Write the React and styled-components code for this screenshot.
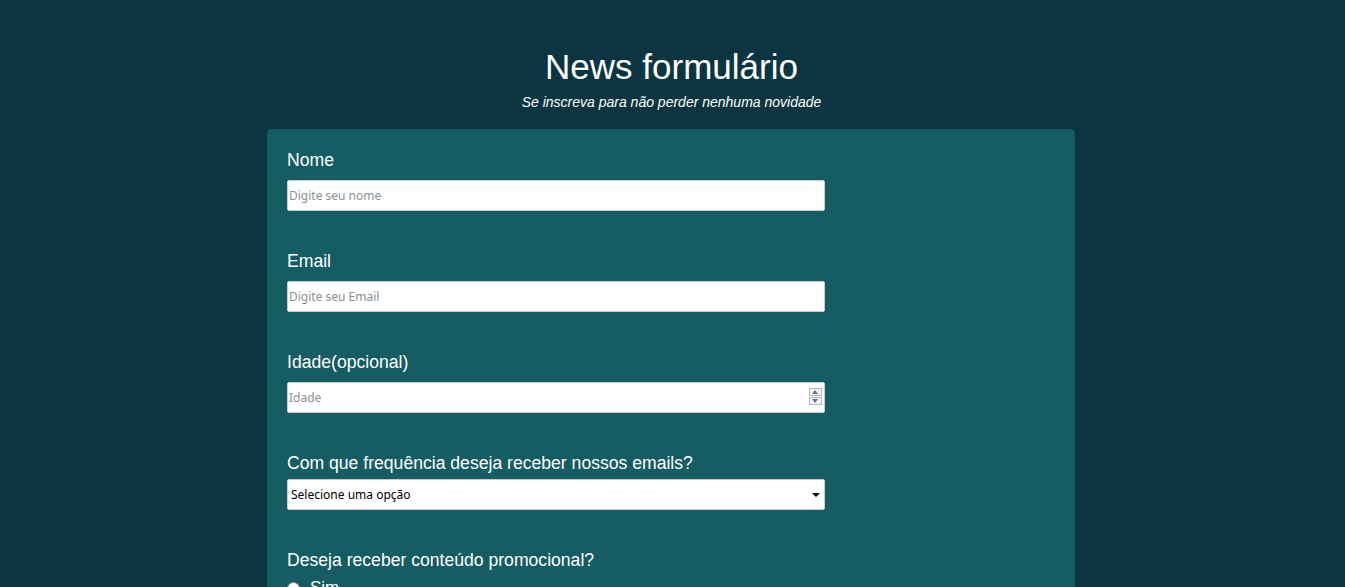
import styled, { createGlobalStyle } from 'styled-components';

const GlobalStyle = createGlobalStyle`
  html, body {
    margin: 0;
    padding: 0;
    overflow: hidden;
    background-color: #0b3641;
    font-family: "Liberation Sans", Arial, sans-serif;
    color: #ffffff;
  }
`;

const Page = styled.main`
  padding-top: 45px;
  display: flex;
  flex-direction: column;
  align-items: center;
`;

const Header = styled.header`
  text-align: center;
  margin-bottom: 18px;
  margin-left: -2px;
`;

const Title = styled.h1`
  margin: 0;
  font-size: 35px;
  font-weight: 400;
  line-height: 44px;
`;

const Subtitle = styled.p`
  margin: 4px 0 0;
  font-size: 14px;
  font-style: italic;
  line-height: 18px;
`;

const Card = styled.form`
  width: 808px;
  box-sizing: border-box;
  margin-left: -3px;
  padding: 21px 20px 40px;
  background-color: #155c63;
  border-radius: 5px;
`;

const Group = styled.div`
  margin-bottom: 40px;
`;

const Label = styled.label`
  display: block;
  font-size: 17.6px;
  line-height: 21px;
  margin-bottom: ${(p) => (p.$tight ? '5px' : '9px')};
`;

const Field = styled.div`
  position: relative;
  width: 70%;
`;

const Input = styled.input`
  display: block;
  width: 100%;
  height: 31px;
  box-sizing: border-box;
  margin: 0;
  padding: 0 1px;
  border: 1px solid #c9c9c9;
  border-radius: 2px;
  background: #ffffff;
  font-family: "Noto Sans", "DejaVu Sans", sans-serif;
  font-size: 12px;
  color: #222;
  outline: none;
  -moz-appearance: textfield;
  &::placeholder {
    color: #8a9197;
  }
  &::-webkit-outer-spin-button,
  &::-webkit-inner-spin-button {
    -webkit-appearance: none;
    margin: 0;
  }
`;

const Stepper = styled.div`
  position: absolute;
  right: 3px;
  top: 6px;
  display: flex;
  flex-direction: column;
  gap: 1px;
  pointer-events: none;
`;

const StepButton = styled.span`
  width: 13px;
  height: 8px;
  box-sizing: border-box;
  border: 1px solid #b8b8b8;
  background: #f4f4f4;
  display: flex;
  align-items: center;
  justify-content: center;
`;

const Select = styled.select`
  display: block;
  width: 100%;
  height: 31px;
  box-sizing: border-box;
  margin: 0;
  padding: 0 3px;
  border: 1px solid #c9c9c9;
  border-radius: 2px;
  background: #ffffff;
  font-family: "Noto Sans", "DejaVu Sans", sans-serif;
  font-size: 12px;
  color: #000;
  appearance: none;
  -webkit-appearance: none;
  outline: none;
`;

const Caret = styled.span`
  position: absolute;
  right: 5px;
  top: 14px;
  width: 0;
  height: 0;
  border-left: 4px solid transparent;
  border-right: 4px solid transparent;
  border-top: 4px solid #000;
  pointer-events: none;
`;

const RadioRow = styled.label`
  display: flex;
  align-items: center;
  gap: 10px;
  font-size: 17px;
  line-height: 22px;
  margin-top: 6px;
`;

const Radio = styled.input`
  margin: 0;
  width: 13px;
  height: 13px;
  accent-color: #3b7fc4;
`;

const Triangle = ({ up }) => (
  <svg width="6" height="4" viewBox="0 0 6 4">
    <path d={up ? 'M0 4 L3 0 L6 4 Z' : 'M0 0 L3 4 L6 0 Z'} fill="#5b6fa8" />
  </svg>
);

export default function App() {
  return (
    <>
      <GlobalStyle />
      <Page>
        <Header>
          <Title>News formulário</Title>
          <Subtitle>Se inscreva para não perder nenhuma novidade</Subtitle>
        </Header>
        <Card onSubmit={(e) => e.preventDefault()}>
          <Group>
            <Label htmlFor="nome">Nome</Label>
            <Field>
              <Input id="nome" type="text" placeholder="Digite seu nome" />
            </Field>
          </Group>
          <Group>
            <Label htmlFor="email">Email</Label>
            <Field>
              <Input id="email" type="email" placeholder="Digite seu Email" />
            </Field>
          </Group>
          <Group>
            <Label htmlFor="idade">Idade(opcional)</Label>
            <Field>
              <Input id="idade" type="number" placeholder="Idade" />
              <Stepper>
                <StepButton>
                  <Triangle up />
                </StepButton>
                <StepButton>
                  <Triangle />
                </StepButton>
              </Stepper>
            </Field>
          </Group>
          <Group>
            <Label htmlFor="freq" $tight>
              Com que frequência deseja receber nossos emails?
            </Label>
            <Field>
              <Select id="freq" defaultValue="">
                <option value="" disabled>
                  Selecione uma opção
                </option>
                <option value="diario">Diariamente</option>
                <option value="semanal">Semanalmente</option>
                <option value="mensal">Mensalmente</option>
              </Select>
              <Caret />
            </Field>
          </Group>
          <Group>
            <Label $tight>Deseja receber conteúdo promocional?</Label>
            <RadioRow>
              <Radio type="radio" name="promo" value="sim" />
              Sim
            </RadioRow>
            <RadioRow>
              <Radio type="radio" name="promo" value="nao" />
              Não
            </RadioRow>
          </Group>
        </Card>
      </Page>
    </>
  );
}
